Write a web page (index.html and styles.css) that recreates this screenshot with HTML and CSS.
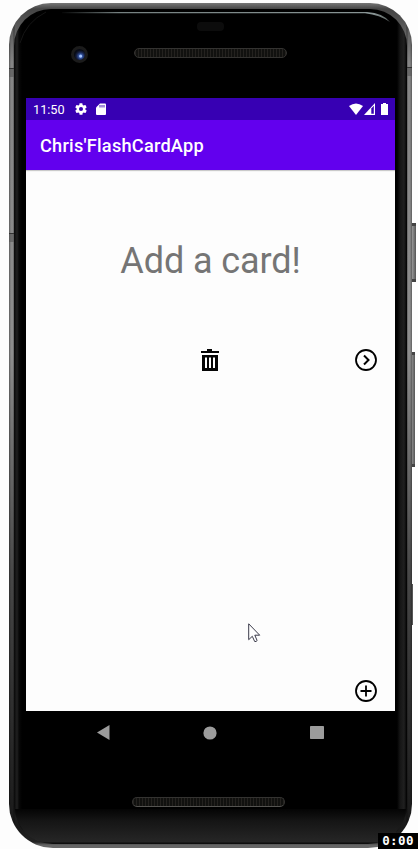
FILE: index.html
```html
<!DOCTYPE html>
<html lang="en">
<head>
<meta charset="utf-8">
<title>Chris'FlashCardApp</title>
<link rel="stylesheet" href="styles.css">
</head>
<body>
<div class="stage">
  <span class="side-button power"></span>
  <span class="side-button volume"></span>
  <span class="side-button lower"></span>
  <div class="device">
    <span class="antenna antenna-left-top"></span>
    <span class="antenna antenna-left-mid"></span>
    <span class="antenna antenna-right"></span>
    <div class="glass">
      <svg class="rim" width="393" height="40" viewBox="0 0 393 40" fill="none">
        <defs><linearGradient id="shine" x1="45" x2="376" y1="0" y2="0" gradientUnits="userSpaceOnUse"><stop stop-color="#000"/><stop offset=".18" stop-color="#758080"/><stop offset=".95" stop-color="#899595"/><stop offset="1" stop-color="#59605f"/></linearGradient></defs>
        <path d="M48 3H353Q369 4 376 13Q366 6 351 4.200H48Z" fill="url(#shine)"/>
        <path d="M6 34Q12 13 32 3" stroke="#151515"/>
      </svg>
      <header class="bezel-top">
        <span class="sensor"></span>
        <span class="camera"></span>
        <span class="speaker"></span>
      </header>
      <main class="screen">
        <div class="status-bar">
          <span class="time">11:50</span>
          <svg class="gear" width="14" height="14" viewBox="0 0 24 24" fill="#fff"><path d="M19.4 13a7.7 7.7 0 0 0 0-2l2.1-1.6a.5.5 0 0 0 .1-.6l-2-3.5a.5.5 0 0 0-.6-.2l-2.5 1a7.300 7.300 0 0 0-1.700-1l-.4-2.600a.5.5 0 0 0-.5-.4h-4a.5.5 0 0 0-.5.4L9.100 5.100a7.500 7.500 0 0 0-1.700 1l-2.500-1a.5.5 0 0 0-.6.2l-2 3.500a.5.5 0 0 0 .1.6L4.600 11a7.900 7.900 0 0 0 0 2l-2.200 1.600a.5.5 0 0 0-.1.6l2 3.500a.5.5 0 0 0 .6.2l2.500-1a7.300 7.300 0 0 0 1.700 1l.4 2.600a.5.5 0 0 0 .5.4h4a.5.5 0 0 0 .5-.4l.4-2.600a7.500 7.500 0 0 0 1.700-1l2.500 1a.5.5 0 0 0 .6-.2l2-3.500a.5.5 0 0 0-.1-.6ZM12 15.500a3.500 3.500 0 1 1 0-7 3.500 3.500 0 0 1 0 7Z"/></svg>
          <svg class="sd" width="10" height="12" viewBox="0 0 10 12"><path d="M4 .5h5q1 0 1 1V11q0 1-1 1H1q-1 0-1-1V4.500Z" fill="#fff"/><path d="M4 2v2.500M6 2v2.500M8 2v2.500" stroke="#3700b3" stroke-width=".9"/></svg>
          <svg class="wifi" width="14" height="12" viewBox="0 0 14 12"><path d="M0 3Q7-2 14 3L7 12Z" fill="#fff"/></svg>
          <svg class="signal" width="11" height="12" viewBox="0 0 11 12"><path d="M0 12 11 0V12Z" fill="#fff"/><path d="M7.300 5.500 9.800 2.800V10.800H7.300Z" fill="#3700b3"/></svg>
          <svg class="battery" width="7" height="12" viewBox="0 0 7 12"><path d="M2 0h3v1h2v11H0V1h2Z" fill="#fff"/></svg>
        </div>
        <div class="app-bar"><h1>Chris'FlashCardApp</h1></div>
        <section class="content">
          <p class="card-text">Add a card!</p>
          <div class="actions">
            <svg class="trash" width="18" height="23" viewBox="0 0 18 23"><path d="M0 2h6V0h5v2h7v2H0ZM1 6h16v16H1Z" fill="#050505"/><path d="M4 8.500h2v10.500H4ZM8 8.500h2v10.500H8ZM12 8.500h2v10.500h-2Z" fill="#fff"/></svg>
            <svg class="next" width="22" height="22" viewBox="0 0 22 22" fill="none" stroke="#000" stroke-width="1.8"><circle cx="11" cy="11" r="10"/><path d="m9 6.500 4.500 4.500L9 15.500" stroke-width="2"/></svg>
          </div>
          <svg class="add" width="22" height="22" viewBox="0 0 22 22" fill="none" stroke="#000" stroke-width="1.8"><circle cx="11" cy="11" r="10"/><path d="M11 5.500v11M5.500 11h11"/></svg>
        </section>
      </main>
      <nav class="nav-bar">
        <svg width="13" height="15" viewBox="0 0 13 15"><path d="M0 7.500 12.500 0V15Z" fill="#9c9c9c"/></svg>
        <svg width="14" height="14" viewBox="0 0 14 14"><circle cx="7" cy="7" r="6.600" fill="#9c9c9c"/></svg>
        <svg width="14" height="13" viewBox="0 0 14 13"><rect width="14" height="13" rx=".7" fill="#9c9c9c"/></svg>
      </nav>
      <footer class="bezel-bottom"><span class="speaker"></span></footer>
    </div>
  </div>
  <svg class="cursor" width="13" height="20" viewBox="0 0 13 20"><path d="M.7.8V16.700L4.300 13.300 6.700 18.500Q8.800 19 9 17.300L6.800 12.200H11.700Z" fill="#fff" stroke="#252535" stroke-width=".9"/></svg>
  <span class="timer">0:00</span>
</div>
</body>
</html>
```

FILE: styles.css
```css
* { box-sizing: border-box; }
body { margin: 0; background: #fdfdfd; font-family: Roboto, sans-serif; overflow: hidden; }
.stage { position: relative; width: 418px; height: 849px; padding: 3px 6px 0 9px; overflow: hidden; }
.device {
  position: relative; width: 403px; height: 845px; padding: 6px 5px 4px; border-radius: 42px 42px 44px 44px;
  background: linear-gradient(90deg, #0005 0, #0000 2px, #0000 4px, #0006 5px, #0000 6px, #0000 397px, #0006 398px, #0000 399px, #0000 401px, #0005 403px), linear-gradient(#777 0, #555 4px, #444 6px, #858585 60px, #8d8d8d 350px, #707070 440px, #484848 570px, #303030 700px, #191919 825px, #222 839px, #666 842px);
}
.glass {
  position: relative; height: 835px; border-radius: 37px 37px 39px 39px; overflow: hidden; padding: 0 12px;
  background: linear-gradient(90deg, #090909 0, #202020 3px, #080808 5px, #000 8px, #0000 10px, #0000 382px, #000 383px, #151515 386px, #202020 390px, #000 393px), linear-gradient(#000 0, #000 800px, #111 803px, #202020 822px, #2a2a2a 832px, #080808 835px);
}
.glass::before { content: ""; position: absolute; inset: 800px 1px 2px; border-radius: 0 0 36px 36px; background: linear-gradient(#040404, #151515 12px, #262626); }
.rim { position: absolute; left: 0; top: 0; }
.antenna { position: absolute; width: 5px; height: 9px; background: #5559; border-top: 1px solid #333; }
.antenna-left-top { left: 0; top: 65px; }
.antenna-left-mid { left: 0; top: 230px; }
.antenna-right { right: 0; top: 64px; }
.side-button { position: absolute; right: 2px; width: 5px; background: linear-gradient(90deg, #aaa 0, #888 2px, #555 5px); border-top: 3px solid #444; border-bottom: 3px solid #444; }
.power { top: 223px; height: 59px; }
.volume { right: 3px; top: 352px; height: 115px; }
.lower { right: 5px; top: 584px; height: 41px; background: #555; border: 0; }
.bezel-top { position: relative; display: grid; height: 89px; }
.sensor { position: absolute; left: 171px; top: 13px; width: 27px; height: 9px; border-radius: 4px; background: #0c0c0c; }
.camera { position: absolute; left: 45px; top: 37px; width: 17px; height: 17px; border-radius: 50%; border: 3px solid #1b1b1b; background: radial-gradient(circle at 60% 65%, #a7c6ff 0 1px, #31509b 2px, #172247 4px, #080b15 6px); }
.speaker { display: block; position: relative; width: 153px; height: 10px; border: 1px solid #343331; border-radius: 5px; background: repeating-linear-gradient(90deg, #24221f 0 1px, #11110f 1px 3px); }
.bezel-top .speaker { margin: 39px 0 0 108px; }
.screen { width: 369px; height: 613px; display: flex; flex-direction: column; background: #fdfdfd; position: relative; }
.status-bar { height: 22px; display: flex; align-items: center; padding: 0 7px; background: #3700b3; color: #fff; }
.time { width: 41px; font-size: 12.7px; line-height: 23px; padding-top: 1px; }
.sd { margin-left: 8px; }
.wifi { margin-left: auto; }
.signal { margin-left: 1px; }
.battery { margin-left: 6px; }
.app-bar { height: 50px; padding: 0 14px; background: #6200ee; color: #fff; box-shadow: 0 1px 1px #0003; }
h1 { margin: 0; font-size: 18.2px; line-height: 51px; font-weight: 500; white-space: nowrap; letter-spacing: .22px; }
.content { flex: 1; display: flex; flex-direction: column; padding: 69px 18px 9px; }
.card-text { margin: 0; color: #757575; font-size: 36px; line-height: 44px; text-align: center; letter-spacing: -.1px; }
.actions { display: grid; grid-template-columns: 157px 18px 1fr; height: 25px; margin-top: 64px; align-items: center; }
.trash { grid-column: 2; margin-top: 2px; }
.next { grid-column: 3; justify-self: end; }
.add { margin-top: auto; align-self: flex-end; }
.nav-bar { position: relative; height: 43px; display: flex; align-items: center; justify-content: space-between; padding: 0 71px; }
.bezel-bottom { position: relative; padding: 43px 0 0 106px; }
.bezel-bottom .speaker { border-bottom-color: #555451; }
.cursor { position: absolute; left: 248px; top: 623px; }
.timer { position: absolute; right: 0; bottom: 0; width: 40px; height: 16px; background: #000; color: #fff; font: bold 12.5px/16px "DejaVu Sans Mono", monospace; text-align: center; letter-spacing: .4px; }
```
